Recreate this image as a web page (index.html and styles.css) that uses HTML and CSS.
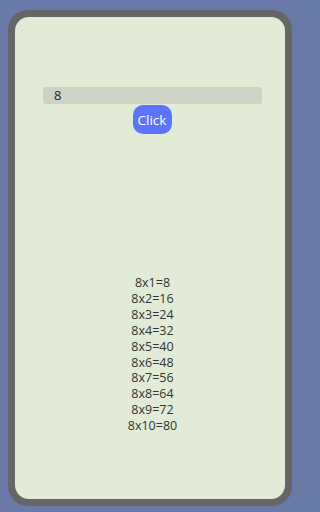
FILE: index.html
```html
<!DOCTYPE html>
<html>
<head>
<meta charset="utf-8">
<link rel="stylesheet" href="styles.css">
</head>
<body>
<div class="device">
  <div class="screen">
    <div class="input-row">
      <div class="input">8</div>
    </div>
    <div class="btn-row">
      <button class="btn">Click</button>
    </div>
    <div class="table">
      <div>8x1=8</div>
      <div>8x2=16</div>
      <div>8x3=24</div>
      <div>8x4=32</div>
      <div>8x5=40</div>
      <div>8x6=48</div>
      <div>8x7=56</div>
      <div>8x8=64</div>
      <div>8x9=72</div>
      <div>8x10=80</div>
    </div>
  </div>
</div>
</body>
</html>
```

FILE: styles.css
```css
html, body {
  margin: 0;
  padding: 0;
  background: #6a7aa8;
  font-family: "Open Sans", "Liberation Sans", sans-serif;
}
body {
  padding: 10px 0 6px 8px;
  height: 512px;
  box-sizing: border-box;
}
.device {
  background: #666666;
  border-radius: 20px;
  padding: 7px;
  width: 284px;
  height: 496px;
  box-sizing: border-box;
}
.screen {
  background: #e1ebd6;
  border-radius: 14px;
  height: 100%;
  box-sizing: border-box;
  padding-top: 70px;
  display: flex;
  flex-direction: column;
  align-items: center;
}
.input-row {
  width: 100%;
  padding: 0 23px 0 28px;
  box-sizing: border-box;
}
.input {
  background: #cdd4c5;
  border-radius: 3px;
  height: 17px;
  line-height: 17px;
  font-size: 13px;
  color: #222;
  padding-left: 11px;
}
.btn-row {
  margin-top: 1px;
  padding-left: 4px;
}
.btn {
  background: #5c74fc;
  color: #ffffff;
  border: none;
  border-radius: 10px;
  width: 39px;
  height: 29px;
  padding: 0;
  font-family: "Open Sans", "Liberation Sans", sans-serif;
  font-size: 13.5px;
}
.table {
  margin-top: 141px;
  padding-left: 5px;
  text-align: center;
  font-size: 12.5px;
  line-height: 15.9px;
  color: #333333;
}
```
